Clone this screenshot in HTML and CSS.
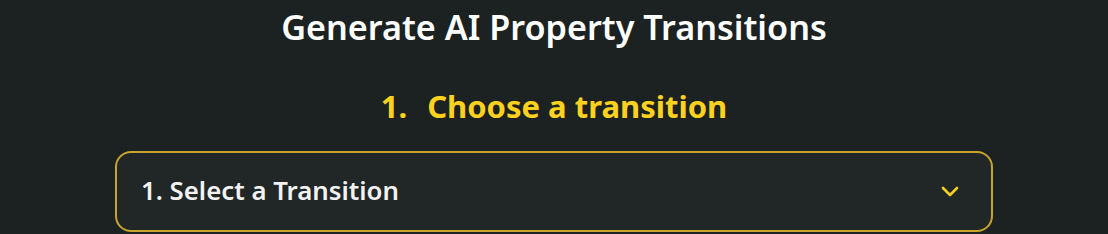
FILE: index.html
```html
<!DOCTYPE html>
<html lang="en">
<head>
    <title>Generate AI Property Transitions</title>
    <link rel="stylesheet" href="styles.css">
</head>
<body>
    <h1 class="title">Generate AI Property Transitions</h1>
    <h2 class="step"><span class="step-num">1.</span>Choose a transition</h2>
    <div class="select">
        <span class="select-label">1. Select a Transition</span>
        <svg class="chevron" width="18" height="12" viewBox="0 0 18 12">
            <path d="M2 2 L9 9 L16 2" fill="none" stroke="#f7cf1e" stroke-width="2.6" stroke-linecap="round" stroke-linejoin="round"/>
        </svg>
    </div>
</body>
</html>
```

FILE: styles.css
```css
body {
    margin: 0;
    background-color: #1c2121;
    font-family: "Noto Sans", "Open Sans", sans-serif;
}
.title {
    margin: 0;
    padding-top: 5px;
    font-size: 34.2px;
    line-height: 44px;
    font-weight: 600;
    color: #ffffff;
    text-align: center;
}
.step {
    margin: 35px 0 0 0;
    font-size: 31px;
    line-height: 44px;
    font-weight: 700;
    color: #fcd21e;
    text-align: center;
}
.step-num {
    margin-right: 20px;
}
.select {
    display: flex;
    align-items: center;
    justify-content: space-between;
    box-sizing: border-box;
    width: 878px;
    height: 81px;
    margin: 23px auto 0 auto;
    padding: 0 32px 0 24px;
    border: 2px solid #c7a42b;
    border-radius: 16px;
    background-color: #212627;
}
.select-label {
    margin-bottom: 4px;
    font-size: 25.8px;
    font-weight: 600;
    color: #f2f2f2;
}
.chevron {
    display: block;
}
```
